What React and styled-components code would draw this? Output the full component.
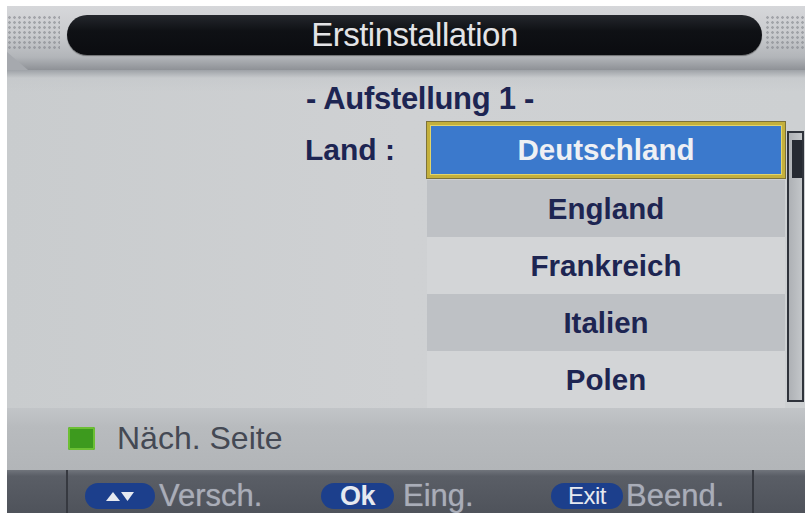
import styled, { createGlobalStyle } from "styled-components";

const GlobalStyle = createGlobalStyle`
  html, body {
    margin: 0;
    padding: 0;
    background: #ffffff;
  }
  body {
    font-family: "Liberation Sans", Arial, sans-serif;
  }
`;

const Screen = styled.div`
  width: 798px;
  height: 507px;
  margin: 6px 0 0 7px;
  display: flex;
  flex-direction: column;
  overflow: hidden;
  background: #a6a9ae;
`;

const Header = styled.div`
  height: 64px;
  flex: none;
  display: flex;
  align-items: flex-start;
  padding-top: 9px;
  box-sizing: border-box;
  background: linear-gradient(
    to bottom,
    #d6d7da 0%,
    #c9cbce 45%,
    #b2b5b9 80%,
    #8e9196 100%
  );
  clip-path: polygon(0 0, 100% 0, 100% 100%, 21px 100%, 0 calc(100% - 18px));
`;

const Grille = styled.div`
  width: ${(p) => p.$w}px;
  height: 34px;
  margin-left: ${(p) => p.$ml || 0}px;
  background-image: radial-gradient(circle, #7e8187 1px, transparent 1.6px);
  background-size: 5px 5px;
  opacity: 0.55;
`;

const TitlePill = styled.div`
  flex: 1;
  height: 40px;
  margin-left: 7px;
  border-radius: 20px;
  background: linear-gradient(to bottom, #24272d 0%, #0f1115 40%, #0b0c10 100%);
  box-shadow: 0 1px 1px rgba(0, 0, 0, 0.4);
  display: flex;
  align-items: center;
  justify-content: center;
  color: #e3e3e6;
  font-size: 33px;
  letter-spacing: -0.5px;
`;

const Body = styled.div`
  flex: none;
  display: flex;
  flex-direction: column;
  background: linear-gradient(to right, #c9ccce 0%, #cfd1d3 50%, #cdd0d2 100%);
`;

const SubtitleBand = styled.div`
  height: 52px;
  display: flex;
  align-items: center;
  justify-content: center;
  padding-left: 28px;
  padding-top: 6px;
  box-sizing: border-box;
  background: linear-gradient(
    to bottom,
    #9ea2a7 0px,
    rgba(196, 199, 202, 0.6) 8px,
    rgba(205, 208, 210, 0) 22px
  );
  color: #1d2552;
  font-size: 31px;
  font-weight: bold;
  letter-spacing: -0.3px;
`;

const Content = styled.div`
  height: 286px;
  display: flex;
`;

const LabelCol = styled.div`
  width: 388px;
  flex: none;
  text-align: right;
  line-height: 56px;
  color: #1d2552;
  font-size: 30px;
  font-weight: bold;
`;

const List = styled.div`
  width: 358px;
  flex: none;
  margin-left: 32px;
  display: flex;
  flex-direction: column;
`;

const Row = styled.div`
  height: ${(p) => (p.$selected ? 56 : 57)}px;
  margin-bottom: ${(p) => (p.$selected ? 2 : 0)}px;
  box-sizing: border-box;
  display: flex;
  align-items: center;
  justify-content: center;
  font-size: 29.5px;
  font-weight: bold;
  color: ${(p) => (p.$selected ? "#eef0f4" : "#1d2552")};
  background: ${(p) =>
    p.$selected ? "#3b79cc" : p.$dark ? "#bec1c5" : "#d3d5d7"};
  border: ${(p) => (p.$selected ? "3px solid #c4b03c" : "none")};
  box-shadow: ${(p) =>
    p.$selected ? "inset 0 0 0 1px #e2d468, 0 0 0 1px #7d7238" : "none"};
`;

const Scrollbar = styled.div`
  width: 17px;
  height: 271px;
  flex: none;
  margin: 9px 0 0 2px;
  box-sizing: border-box;
  border: 2px solid #2f333b;
  background: linear-gradient(to right, #aeb1b5, #c3c6c9);
  display: flex;
  flex-direction: column;
  align-items: flex-end;
`;

const Thumb = styled.div`
  width: 10px;
  height: 38px;
  margin-top: 7px;
  background: #262a32;
`;

const HintBar = styled.div`
  height: 62px;
  flex: none;
  display: flex;
  align-items: center;
  gap: 22px;
  padding: 0 0 2px 61px;
  box-sizing: border-box;
  background: linear-gradient(to bottom, #c2c5c8 0%, #b8bbbe 30%, #b2b5b8 100%);
  color: #444954;
  font-size: 32px;
`;

const GreenKey = styled.div`
  width: 27px;
  height: 23px;
  border-radius: 2px;
  background: #3d9a1e;
  box-shadow: inset 0 0 0 2px #6cbf34;
`;

const Footer = styled.div`
  flex: 1;
  display: flex;
  background: linear-gradient(to bottom, #70747b 0px, #5a5e66 6px, #4f535b 100%);
`;

const FooterSide = styled.div`
  width: ${(p) => p.$w}px;
  flex: none;
  box-sizing: border-box;
  border-left: ${(p) => (p.$right ? "2px solid #363940" : "none")};
  border-right: ${(p) => (p.$right ? "none" : "2px solid #363940")};
`;

const FooterMiddle = styled.div`
  flex: 1;
  display: flex;
  align-items: flex-end;
  padding: 0 0 4px 17px;
`;

const FooterItem = styled.div`
  width: ${(p) => (p.$w ? `${p.$w}px` : "auto")};
  display: flex;
  align-items: center;
  gap: ${(p) => p.$gap}px;
`;

const KeyPill = styled.div`
  width: ${(p) => p.$w}px;
  height: 26px;
  border-radius: 13px;
  background: #1c3f8c;
  display: flex;
  align-items: center;
  justify-content: center;
  color: #e6e9f0;
  font-size: ${(p) => p.$fs || 22}px;
  font-weight: ${(p) => (p.$bold ? "bold" : "normal")};
  letter-spacing: -0.5px;
`;

const FooterText = styled.span`
  color: #a9adb8;
  font-size: 31px;
  line-height: 26px;
  text-shadow: 0 0 1px rgba(200, 204, 214, 0.5);
`;

const countries = [
  { name: "Deutschland", selected: true },
  { name: "England", dark: true },
  { name: "Frankreich" },
  { name: "Italien", dark: true },
  { name: "Polen" },
];

const ArrowsIcon = () => (
  <svg width="30" height="12" viewBox="0 0 30 12">
    <polygon points="1,11 8,2 15,11" fill="#e6e9f0" />
    <polygon points="16,2 29,2 22.5,11" fill="#e6e9f0" />
  </svg>
);

const App = () => (
  <>
    <GlobalStyle />
    <Screen>
      <Header>
        <Grille $w={53} />
        <TitlePill>Erstinstallation</TitlePill>
        <Grille $w={40} $ml={3} />
      </Header>
      <Body>
        <SubtitleBand>- Aufstellung 1 -</SubtitleBand>
        <Content>
          <LabelCol>Land :</LabelCol>
          <List>
            {countries.map((c) => (
              <Row key={c.name} $selected={c.selected} $dark={c.dark}>
                {c.name}
              </Row>
            ))}
          </List>
          <Scrollbar>
            <Thumb />
          </Scrollbar>
        </Content>
      </Body>
      <HintBar>
        <GreenKey />
        <span>Näch. Seite</span>
      </HintBar>
      <Footer>
        <FooterSide $w={61} />
        <FooterMiddle>
          <FooterItem $w={236} $gap={4}>
            <KeyPill $w={70}>
              <ArrowsIcon />
            </KeyPill>
            <FooterText>Versch.</FooterText>
          </FooterItem>
          <FooterItem $w={230} $gap={9}>
            <KeyPill $w={73} $fs={27} $bold>
              Ok
            </KeyPill>
            <FooterText>Eing.</FooterText>
          </FooterItem>
          <FooterItem $gap={3}>
            <KeyPill $w={72} $fs={24}>
              Exit
            </KeyPill>
            <FooterText>Beend.</FooterText>
          </FooterItem>
        </FooterMiddle>
        <FooterSide $w={53} $right />
      </Footer>
    </Screen>
  </>
);

export default App;
